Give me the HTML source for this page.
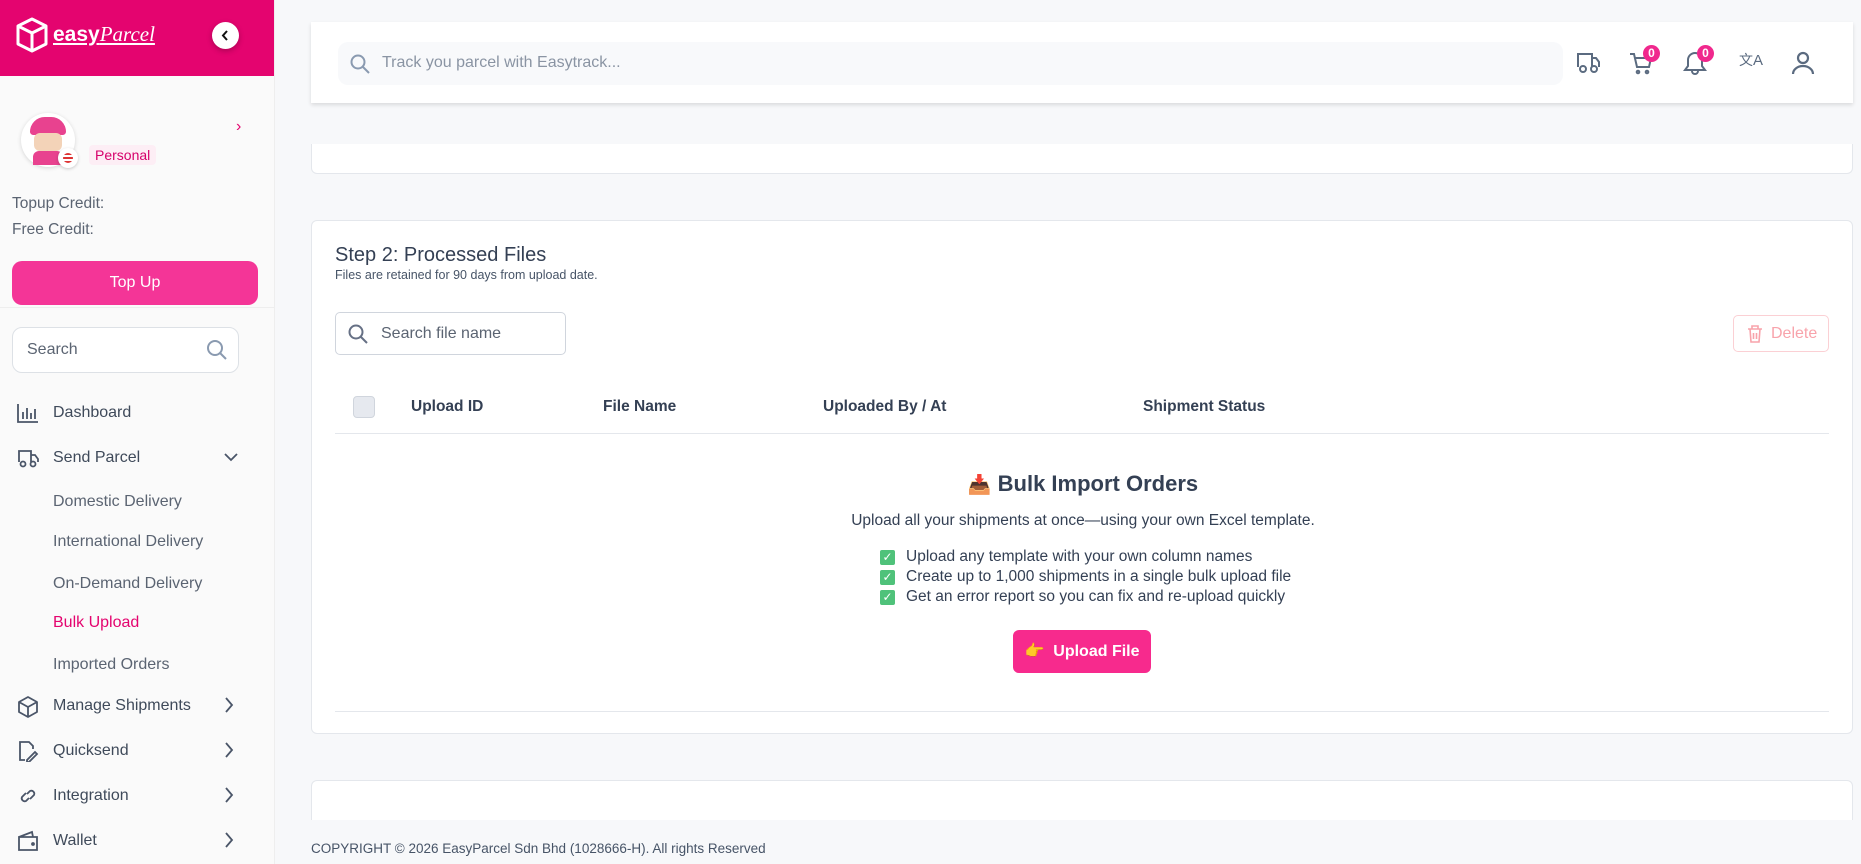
<!DOCTYPE html>
<html><head><meta charset="utf-8"><style>
*{box-sizing:border-box;margin:0;padding:0}
body{width:1861px;height:864px;overflow:hidden;background:#f7f8fa;font-family:"Liberation Sans",sans-serif;color:#344054;position:relative}
.side{position:absolute;left:0;top:0;width:275px;height:864px;background:#fafafa;border-right:1px solid #eee}
.hdr{height:76px;background:#e4046f;position:relative}
.ab{position:absolute}
.menu{position:absolute;left:53px;font-size:16px;color:#3f4a5a}
.sub{color:#5b6472}
.ic{position:absolute;left:17px}
.chev{position:absolute;left:224px}
.card{position:absolute;left:311px;width:1542px;background:#fff;border:1px solid #e4e7ec;border-radius:6px}
.th{position:absolute;top:398px;font-size:15.5px;font-weight:bold;color:#344054}
</style></head><body>
<div class="side">
 <div class="hdr">
  <svg class="ab" style="left:15px;top:17px" width="34" height="36" viewBox="0 0 34 36" fill="none" stroke="#fff" stroke-width="3" stroke-linejoin="round"><path d="M17 2L31 9V27L17 34L3 27V9Z M3 9L17 16L31 9 M17 16V34"/></svg>
  <div class="ab" style="left:53px;top:22px;color:#fff;font-weight:bold;font-size:21px;text-decoration:underline">easy<span style="font-style:italic;font-weight:normal;font-family:'Liberation Serif',serif">Parcel</span></div>
  <div class="ab" style="left:212px;top:22px;width:27px;height:27px;border-radius:50%;background:#fff;box-shadow:0 2px 6px rgba(0,0,0,.25)"><svg width="27" height="27" viewBox="0 0 27 27"><path d="M15 9L11 13.5L15 18" stroke="#111" stroke-width="2" fill="none"/></svg></div>
 </div>
 <div class="ab" style="left:21px;top:113px;width:54px;height:54px;border-radius:50%;background:#fff;box-shadow:0 1px 4px rgba(0,0,0,.15)"><div style="position:absolute;left:9px;top:4px;width:36px;height:18px;background:#e8428f;border-radius:18px 18px 4px 4px"></div><div style="position:absolute;left:13px;top:20px;width:28px;height:18px;background:#f3d3b8;border-radius:6px"></div><div style="position:absolute;left:12px;top:38px;width:30px;height:14px;background:#e8428f;border-radius:6px 6px 0 0"></div></div>
 <div class="ab" style="left:58px;top:148px;width:20px;height:20px;border-radius:50%;background:#fff;box-shadow:0 1px 3px rgba(0,0,0,.2)"><div style="margin:5px;width:10px;height:10px;border-radius:50%;background:repeating-linear-gradient(#d33 0 2px,#fff 2px 4px)"></div></div>
 <div class="ab" style="left:89px;top:145px;padding:2px 6px;background:#fdeef5;color:#d6006b;font-size:14px;border-radius:4px">Personal</div>
 <div class="ab" style="left:236px;top:118px;color:#e4046f;font-size:16px">›</div>
 <div class="ab" style="left:12px;top:195px;font-size:15.5px;color:#5b6472">Topup Credit:</div>
 <div class="ab" style="left:12px;top:221px;font-size:15.5px;color:#5b6472">Free Credit:</div>
 <div class="ab" style="left:12px;top:261px;width:246px;height:44px;border-radius:10px;background:#f43597;color:#fff;font-size:16px;text-align:center;line-height:44px">Top Up</div>
 <div class="ab" style="left:0;top:307px;width:275px;border-top:1px solid #eee"></div>
 <div class="ab" style="left:12px;top:327px;width:227px;height:46px;border:1px solid #dde1e6;border-radius:10px;background:#fff;font-size:16px;color:#5b6472;padding:13px 14px">Search<svg class="ab" style="left:193px;top:11px" width="22" height="22" viewBox="0 0 22 22" fill="none" stroke="#8a9ab0" stroke-width="2"><circle cx="9" cy="9" r="7"/><path d="M14 14L20 20"/></svg></div>
 <svg class="ic" style="top:403px" width="22" height="20" viewBox="0 0 22 20" fill="none" stroke="#4a5568" stroke-width="1.8"><path d="M1 1V19H21 M6 16V9 M10 16V5 M14 16V10 M18 16V6"/></svg>
 <div class="menu" style="top:404px">Dashboard</div>
 <svg class="ic" style="top:448px" width="22" height="20" viewBox="0 0 22 20" fill="none" stroke="#4a5568" stroke-width="1.8"><path d="M2 14V3H14V14 M14 7H18L21 11V14"/><circle cx="6" cy="16" r="2.5"/><circle cx="16" cy="16" r="2.5"/></svg>
 <div class="menu" style="top:449px">Send Parcel</div>
 <svg class="chev" style="top:452px" width="14" height="10" viewBox="0 0 14 10" fill="none" stroke="#4a5568" stroke-width="1.8"><path d="M1 2L7 8L13 2"/></svg>
 <div class="menu sub" style="top:493px">Domestic Delivery</div>
 <div class="menu sub" style="top:533px">International Delivery</div>
 <div class="menu sub" style="top:575px">On-Demand Delivery</div>
 <div class="menu" style="top:614px;color:#e4046f">Bulk Upload</div>
 <div class="menu sub" style="top:656px">Imported Orders</div>
 <svg class="ic" style="top:696px" width="22" height="22" viewBox="0 0 22 22" fill="none" stroke="#4a5568" stroke-width="1.8" stroke-linejoin="round"><path d="M11 1L20 6V16L11 21L2 16V6Z M2 6L11 11L20 6 M11 11V21"/></svg>
 <div class="menu" style="top:697px">Manage Shipments</div>
 <svg class="ic" style="top:740px" width="22" height="22" viewBox="0 0 22 22" fill="none" stroke="#4a5568" stroke-width="1.8"><path d="M8 20H3V2H12L16 6V9 M10 20L18 12L20 14L12 22H10Z"/></svg>
 <div class="menu" style="top:742px">Quicksend</div>
 <svg class="ic" style="top:786px" width="22" height="20" viewBox="0 0 22 20" fill="none" stroke="#4a5568" stroke-width="1.8"><path d="M9 7L5 11A3 3 0 0 0 9 15L12 12 M13 13L17 9A3 3 0 0 0 13 5L10 8"/></svg>
 <div class="menu" style="top:787px">Integration</div>
 <svg class="ic" style="top:830px" width="22" height="22" viewBox="0 0 22 22" fill="none" stroke="#4a5568" stroke-width="1.8"><path d="M2 7H20V20H2Z M2 7L15 2L16 7"/><circle cx="16" cy="14" r="1"/></svg>
 <div class="menu" style="top:832px">Wallet</div>
 <svg class="chev" style="top:697px" width="10" height="16" viewBox="0 0 10 16" fill="none" stroke="#4a5568" stroke-width="1.8"><path d="M2 1L8 8L2 15"/></svg>
 <svg class="chev" style="top:742px" width="10" height="16" viewBox="0 0 10 16" fill="none" stroke="#4a5568" stroke-width="1.8"><path d="M2 1L8 8L2 15"/></svg>
 <svg class="chev" style="top:787px" width="10" height="16" viewBox="0 0 10 16" fill="none" stroke="#4a5568" stroke-width="1.8"><path d="M2 1L8 8L2 15"/></svg>
 <svg class="chev" style="top:832px" width="10" height="16" viewBox="0 0 10 16" fill="none" stroke="#4a5568" stroke-width="1.8"><path d="M2 1L8 8L2 15"/></svg>
</div>

<div class="ab" style="left:311px;top:22px;width:1542px;height:81px;background:#fff;box-shadow:0 2px 4px rgba(0,0,0,.12)">
 <div class="ab" style="left:27px;top:20px;width:1225px;height:43px;background:#f8f9fb;border-radius:10px;font-size:16px;color:#8a94a3;padding:12px 44px">Track you parcel with Easytrack...
  <svg class="ab" style="left:12px;top:12px" width="20" height="20" viewBox="0 0 20 20" fill="none" stroke="#8a9ab0" stroke-width="2"><circle cx="8" cy="8" r="6.5"/><path d="M13 13L19 19"/></svg></div>
 <svg class="ab" style="left:1264px;top:27px" width="26" height="26" viewBox="0 0 26 26" fill="none" stroke="#5b6b80" stroke-width="2"><path d="M3 18V5H17V18 M17 9H21L24 13V18"/><circle cx="8" cy="20" r="3"/><circle cx="19" cy="20" r="3"/></svg>
 <svg class="ab" style="left:1318px;top:29px" width="24" height="24" viewBox="0 0 24 24" fill="none" stroke="#5b6b80" stroke-width="2"><path d="M1 3H5L8 16H20L22 7H6"/><circle cx="9" cy="21" r="1.3"/><circle cx="18" cy="21" r="1.3"/></svg>
 <div class="ab" style="left:1332px;top:23px;width:17px;height:17px;border-radius:50%;background:#f0288d;color:#fff;font-size:12px;font-weight:bold;text-align:center;line-height:17px">0</div>
 <svg class="ab" style="left:1372px;top:28px" width="24" height="26" viewBox="0 0 24 26" fill="none" stroke="#5b6b80" stroke-width="2"><path d="M2 20H22L19 16V10A7 7 0 0 0 5 10V16Z M9 21A3 3 0 0 0 15 21"/></svg>
 <div class="ab" style="left:1386px;top:23px;width:17px;height:17px;border-radius:50%;background:#f0288d;color:#fff;font-size:12px;font-weight:bold;text-align:center;line-height:17px">0</div>
 <div class="ab" style="left:1428px;top:28px;font-size:14px;color:#5b6b80">文<span style="font-size:15px">A</span></div>
 <svg class="ab" style="left:1479px;top:28px" width="26" height="26" viewBox="0 0 26 26" fill="none" stroke="#5b6b80" stroke-width="2.2"><circle cx="13" cy="8" r="5"/><path d="M3 24A10 8 0 0 1 23 24"/></svg>
</div>

<div class="ab" style="left:311px;top:144px;width:1542px;height:30px;background:#fff;border:1px solid #e4e7ec;border-top:none;border-radius:0 0 6px 6px"></div>

<div class="card" style="top:220px;height:514px"></div>
<div class="ab" style="left:335px;top:244px;font-size:20px;color:#344054">Step 2: Processed Files</div>
<div class="ab" style="left:335px;top:268px;font-size:12.5px;color:#475467">Files are retained for 90 days from upload date.</div>
<div class="ab" style="left:335px;top:312px;width:231px;height:43px;border:1px solid #d0d5dd;border-radius:5px;font-size:16px;color:#5b6472;padding:12px 45px">Search file name
 <svg class="ab" style="left:12px;top:11px" width="20" height="20" viewBox="0 0 20 20" fill="none" stroke="#667085" stroke-width="2"><circle cx="8" cy="8" r="6.5"/><path d="M13 13L19 19"/></svg></div>
<div class="ab" style="left:1733px;top:315px;width:96px;height:37px;border:1px solid #fbd0d4;border-radius:5px;color:#f8a3ab;font-size:16px;padding:9px 0 0 37px">Delete
 <svg class="ab" style="left:13px;top:9px" width="16" height="18" viewBox="0 0 16 18" fill="none" stroke="#f8a3ab" stroke-width="1.6"><path d="M1 4H15 M5 4V1H11V4 M3 4L4 17H12L13 4 M6.5 8V14 M9.5 8V14"/></svg></div>
<div class="ab" style="left:353px;top:396px;width:22px;height:22px;border-radius:4px;background:#e6e9ef;border:1px solid #d0d5dd"></div>
<div class="th" style="left:411px">Upload ID</div>
<div class="th" style="left:603px">File Name</div>
<div class="th" style="left:823px">Uploaded By / At</div>
<div class="th" style="left:1143px">Shipment Status</div>
<div class="ab" style="left:335px;top:433px;width:1494px;border-top:1px solid #e4e7ec"></div>
<div class="ab" style="left:0;top:471px;width:2166px;text-align:center;font-size:22px;font-weight:bold;color:#344054"><span style="font-size:19px">📥</span> Bulk Import Orders</div>
<div class="ab" style="left:0;top:512px;width:2166px;text-align:center;font-size:15.5px;color:#344054">Upload all your shipments at once—using your own Excel template.</div>
<div class="ab" style="left:880px;top:547px;font-size:15.5px;line-height:20px;color:#344054">
 <div><span style="display:inline-block;width:15px;height:15px;background:#4fc27a;border-radius:2px;color:#fff;font-size:12px;text-align:center;line-height:15px;margin-right:11px">✓</span>Upload any template with your own column names</div>
 <div><span style="display:inline-block;width:15px;height:15px;background:#4fc27a;border-radius:2px;color:#fff;font-size:12px;text-align:center;line-height:15px;margin-right:11px">✓</span>Create up to 1,000 shipments in a single bulk upload file</div>
 <div><span style="display:inline-block;width:15px;height:15px;background:#4fc27a;border-radius:2px;color:#fff;font-size:12px;text-align:center;line-height:15px;margin-right:11px">✓</span>Get an error report so you can fix and re-upload quickly</div>
</div>
<div class="ab" style="left:1013px;top:630px;width:138px;height:43px;border-radius:6px;background:#f72a8d;color:#fff;font-size:16px;font-weight:bold;line-height:43px;text-align:center">👉&nbsp; Upload File</div>
<div class="ab" style="left:335px;top:711px;width:1494px;border-top:1px solid #e4e7ec"></div>

<div class="ab" style="left:311px;top:780px;width:1542px;height:40px;background:#fff;border:1px solid #e4e7ec;border-bottom:none;border-radius:6px 6px 0 0"></div>
<div class="ab" style="left:311px;top:841px;font-size:13.5px;color:#475467">COPYRIGHT © 2026 EasyParcel Sdn Bhd (1028666-H). All rights Reserved</div>
</body></html>
